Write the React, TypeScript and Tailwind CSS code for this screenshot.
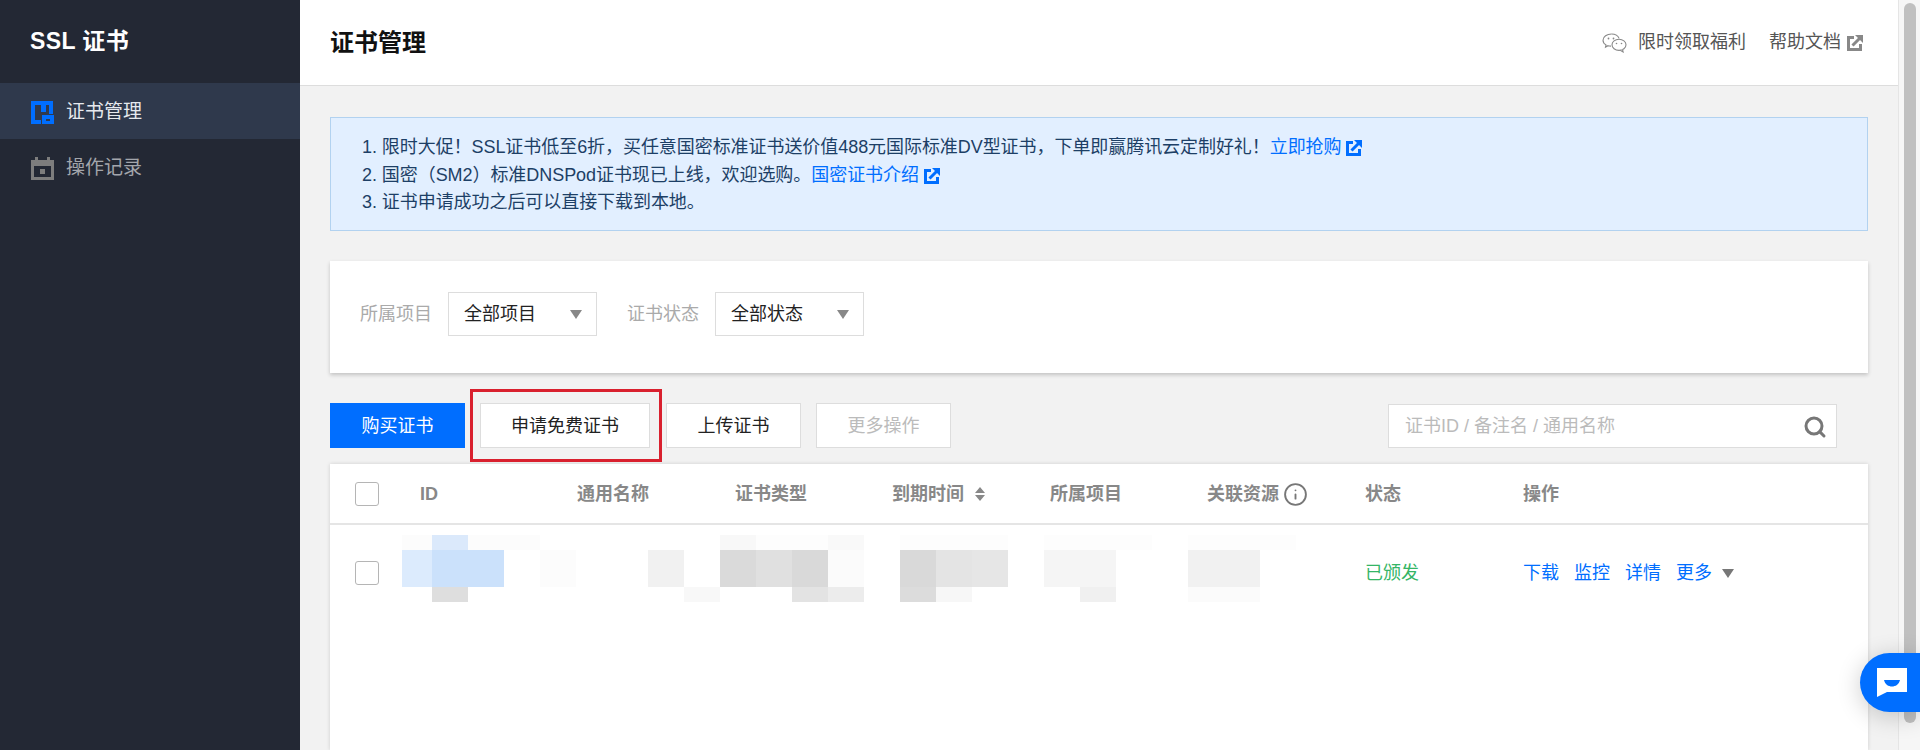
import React from 'react';
import { Info, Search } from 'lucide-react';

const FONT = "font-['Liberation_Sans','Noto_Sans_CJK_SC',sans-serif]";
const COLUMNS = 'grid grid-cols-[90px_157px_158px_157px_158px_157px_158px_158px_1fr] items-center';

const blocks: Array<[number, number, number, number, string]> = [
  // top row
  [72, 10, 138, 15, '#fcfcfc'],
  [102, 10, 36, 15, '#dbe9fb'],
  [390, 10, 36, 15, '#f8f8f8'],
  [426, 10, 72, 15, '#fdfdfd'],
  [498, 10, 36, 15, '#f9f9f9'],
  [570, 10, 108, 15, '#fdfdfd'],
  [714, 10, 108, 15, '#fdfdfd'],
  [858, 10, 108, 15, '#fdfdfd'],
  // middle row
  [72, 25, 30, 37, '#dcebfd'],
  [102, 25, 72, 37, '#cbe1fb'],
  [210, 25, 36, 37, '#fcfcfc'],
  [318, 25, 36, 37, '#f1f1f1'],
  [390, 25, 36, 37, '#dadada'],
  [426, 25, 36, 37, '#e0e0e0'],
  [462, 25, 36, 37, '#d9d9d9'],
  [498, 25, 36, 37, '#fbfbfb'],
  [570, 25, 36, 37, '#d9d9d9'],
  [606, 25, 36, 37, '#e4e4e4'],
  [642, 25, 36, 37, '#e6e6e6'],
  [714, 25, 72, 37, '#f5f5f5'],
  [858, 25, 72, 37, '#f1f1f1'],
  // bottom row
  [102, 62, 36, 15, '#dedede'],
  [354, 62, 36, 15, '#f8f8f8'],
  [462, 62, 36, 15, '#e3e3e3'],
  [498, 62, 36, 15, '#ececec'],
  [570, 62, 36, 15, '#dcdcdc'],
  [606, 62, 36, 15, '#f7f7f7'],
  [750, 62, 36, 15, '#f0f0f0'],
  [858, 62, 72, 15, '#fbfbfb'],
];

function ExternalIcon({ className }: { className?: string }) {
  return (
    <svg viewBox="0 0 16 16" className={className} fill="none" stroke="currentColor" strokeWidth="3">
      <path d="M7 2.500H1.500v12h12V9" />
      <path d="M5.500 10.500 12.500 3.500" />
      <path d="M8 0h8v8z" fill="currentColor" stroke="none" />
    </svg>
  );
}

function WechatIcon() {
  return (
    <svg viewBox="0 0 25 20" className="h-5 w-[25px] text-[#888]" fill="none" stroke="currentColor" strokeWidth="1.1">
      <path d="M9.500 1C5 1 1 3.700 1 7.200c0 2 1.200 3.600 3 4.700l-.5 2.200 2.500-1.400c1 .3 2 .4 3 .4" />
      <path d="M9.500 1c3.600 0 6.600 1.800 7.600 4.400" />
      <ellipse cx="17" cy="11.800" rx="7" ry="5.600" fill="#fff" />
      <path d="m20.600 16.600.5 2.400-2.800-1.700" fill="#fff" />
      <circle cx="6.500" cy="5.500" r=".9" fill="currentColor" stroke="none" />
      <circle cx="11.500" cy="5.500" r=".9" fill="currentColor" stroke="none" />
      <circle cx="14.500" cy="10.500" r=".8" fill="currentColor" stroke="none" />
      <circle cx="19.500" cy="10.500" r=".8" fill="currentColor" stroke="none" />
    </svg>
  );
}

function Caret({ className }: { className: string }) {
  return (
    <svg viewBox="0 0 12 9" className={className}>
      <path d="M0 0h12L6 9z" fill="currentColor" />
    </svg>
  );
}

function Select({ label, value }: { label: string; value: string }) {
  return (
    <div className="flex items-center gap-4">
      <span className="text-[18px] text-[#aaa]">{label}</span>
      <div className="flex h-11 w-[149px] items-center justify-between border border-[#ddd] bg-white pl-[15px] pr-[14px] text-[18px] text-[#222]">
        {value}
        <Caret className="h-[9px] w-3 text-[#888]" />
      </div>
    </div>
  );
}

function Checkbox() {
  return <div className="ml-[25px] h-6 w-6 rounded-[3px] border border-[#b5b5b5] bg-white" />;
}

export default function App() {
  return (
    <div className={`flex h-[750px] overflow-hidden bg-[#f2f2f2] ${FONT}`}>
      <aside className="w-[300px] shrink-0 bg-[#232834]">
        <div className="flex h-[83px] items-center pl-[30px] text-[23px] font-bold tracking-[0.4px] text-white">SSL 证书</div>
        <div className="flex h-[56px] items-center gap-[12px] bg-[#2f394c] pl-[31px] pt-[2px] text-[19px] text-[#e6e9ee]">
          <svg viewBox="0 0 23 23" className="h-[23px] w-[23px] text-[#006eff]">
            <path
              fill="currentColor"
              fillRule="evenodd"
              d="M0 0h22v13h-4V4h-3v7h-5V4H4v15h6v4H0zM11 14h12v9H11zm4 4v2h4v-2z"
            />
          </svg>
          证书管理
        </div>
        <div className="flex h-[56px] items-center gap-[12px] pl-[31px] pt-[3px] text-[19px] text-[#a3a6ac]">
          <svg viewBox="0 0 23 23" className="h-[23px] w-[23px] text-[#7d7d7d]">
            <path
              fill="currentColor"
              fillRule="evenodd"
              d="M4 0h3v3h9V0h3v3h4v20H0V3h4zM3 9v11h17V9zm6 3h5v5H9z"
            />
          </svg>
          操作记录
        </div>
      </aside>

      <main className="flex min-w-0 flex-1 flex-col">
        <header className="flex h-[86px] shrink-0 items-center justify-between border-b border-[#ddd] bg-white pl-[30px] pr-[35px]">
          <h1 className="text-[24px] font-bold text-[#111]">证书管理</h1>
          <div className="flex items-center text-[18px] text-[#555]">
            <WechatIcon />
            <span className="ml-[11px]">限时领取福利</span>
            <span className="ml-[23px]">帮助文档</span>
            <ExternalIcon className="ml-[6px] h-4 w-4 text-[#888]" />
          </div>
        </header>

        <div className="flex flex-1 flex-col pl-[30px] pr-[30px] pt-[31px]">
          <div className="h-[114px] border border-[#b2d2f0] bg-[#e2efff] pl-[31px] pt-[16px] text-[18px] leading-[27.500px] tracking-[-0.06px] text-[#1d3f66]">
            <p>
              1. 限时大促！SSL证书低至6折，买任意国密标准证书送价值488元国际标准DV型证书，下单即赢腾讯云定制好礼！
              <span className="text-[#006eff]">立即抢购</span>
              <ExternalIcon className="ml-[5px] inline h-4 w-4 align-[-3px] text-[#006eff]" />
            </p>
            <p>
              2. 国密（SM2）标准DNSPod证书现已上线，欢迎选购。
              <span className="text-[#006eff]">国密证书介绍</span>
              <ExternalIcon className="ml-[5px] inline h-4 w-4 align-[-3px] text-[#006eff]" />
            </p>
            <p>3. 证书申请成功之后可以直接下载到本地。</p>
          </div>

          <div className="mt-[30px] flex h-[112px] items-start gap-[30px] bg-white pl-[30px] pt-[31px] shadow-[0_2px_4px_rgba(0,0,0,0.2)]">
            <Select label="所属项目" value="全部项目" />
            <Select label="证书状态" value="全部状态" />
          </div>

          <div className="mt-[30px] flex h-[45px] items-center text-[18px]">
            <button className="h-[45px] w-[135px] bg-[#006eff] pt-[2px] text-white">购买证书</button>
            <div className="relative ml-[15px]">
              <button className="h-[45px] w-[170px] border border-[#ddd] bg-white pt-[2px] text-[#222]">申请免费证书</button>
              <div className="absolute -bottom-[14px] -left-[10px] -right-[12px] -top-[14px] border-[3px] border-[#d9202e]" />
            </div>
            <button className="ml-4 h-[45px] w-[135px] border border-[#ddd] bg-white pt-[2px] text-[#222]">上传证书</button>
            <button className="ml-[15px] h-[45px] w-[135px] border border-[#ddd] bg-white pt-[2px] text-[#bbb]">更多操作</button>
            <div className="ml-auto mr-[31px] flex h-[44px] w-[449px] items-center justify-between border border-[#ddd] bg-white pl-4 pr-[9px] pt-[2px] text-[#bbb]">
              <span>证书ID / 备注名 / 通用名称</span>
              <Search className="h-6 w-6 text-[#777]" strokeWidth={3} />
            </div>
          </div>

          <div className="mt-4 flex-1 bg-white shadow-[0_0_4px_rgba(0,0,0,0.15)]">
            <div className={`${COLUMNS} h-[61px] border-b-2 border-[#e5e5e5] pt-[1px] text-[18px] font-bold text-[#888]`}>
              <Checkbox />
              <span>ID</span>
              <span>通用名称</span>
              <span>证书类型</span>
              <span className="flex items-center gap-[11px]">
                到期时间
                <svg viewBox="0 0 10 14" className="h-[14px] w-[10px]">
                  <path d="M5 0l5 6H0zM5 14 0 8h10z" fill="currentColor" />
                </svg>
              </span>
              <span>所属项目</span>
              <span className="flex items-center gap-1">
                关联资源
                <Info className="h-[25px] w-[25px] text-[#777]" strokeWidth={1.8} />
              </span>
              <span>状态</span>
              <span>操作</span>
            </div>

            <div className={`${COLUMNS} relative h-[96px] text-[18px]`}>
              <svg className="absolute left-0 top-0 h-[96px] w-[1000px]" viewBox="0 0 1000 96">
                {blocks.map(([x, y, w, h, fill], i) => (
                  <rect key={i} x={x} y={y} width={w} height={h} fill={fill} />
                ))}
              </svg>
              <div className="relative">
                <Checkbox />
              </div>
              <span className="col-start-8 text-[#35b566]">已颁发</span>
              <span className="flex items-center gap-[15px] text-[#006eff]">
                <span>下载</span>
                <span>监控</span>
                <span>详情</span>
                <span className="flex items-center gap-[10px]">
                  更多
                  <Caret className="h-[9px] w-3 text-[#777]" />
                </span>
              </span>
            </div>
          </div>
        </div>
      </main>

      <div className="flex w-[22px] shrink-0 justify-center border-l border-[#e5e5e5] bg-[#f6f6f6] pt-[3px]">
        <div className="h-[720px] w-3 rounded-full bg-[#c0c0c0]" />
      </div>

      <div className="fixed right-0 top-[653px] flex h-[59px] w-[60px] items-center justify-center rounded-l-full bg-[#006eff] pl-[4px] shadow-[0_4px_24px_rgba(0,0,0,0.2)]">
        <svg viewBox="0 0 30 30" className="h-[30px] w-[30px]">
          <path fill="#fff" fillRule="evenodd" d="M0 0h30v24H10L0 29zM7 12c1 4.500 4.500 6.500 8 6.500s7-2 8-6.500z" />
        </svg>
      </div>
    </div>
  );
}
